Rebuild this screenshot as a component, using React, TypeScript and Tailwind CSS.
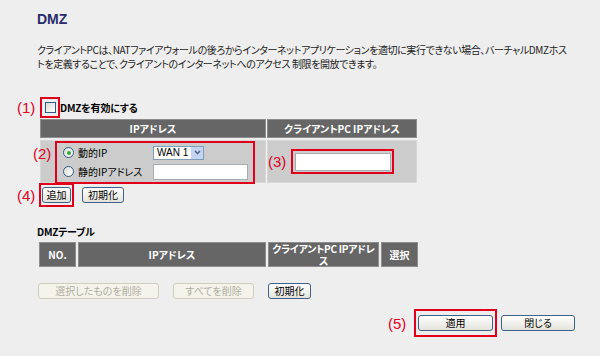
import clsx from "clsx";

const jp = "font-['Noto_Sans_CJK_JP',sans-serif] [font-feature-settings:'palt']";

const Mark = ({ n, className = "" }: { n: number; className?: string }) => (
  <span className={clsx("font-['Liberation_Sans',sans-serif] text-[15px] leading-none text-[#e0001b]", className)}>
    ({n})
  </span>
);

const Btn = ({ label, className = "", disabled = false }: { label: string; className?: string; disabled?: boolean }) => (
  <button
    className={clsx(
      "h-[16px] rounded-[3px] border text-[10px] leading-none whitespace-nowrap",
      jp,
      disabled
        ? "border-[#cfcdc0] bg-[#f5f4ec] text-[#b0ad9f]"
        : "border-[#3d6189] bg-linear-to-b from-white to-[#e4e3dc] text-black",
      className
    )}
  >
    {label}
  </button>
);

const Radio = ({ checked = false }: { checked?: boolean }) => (
  <span className="flex h-[11px] w-[11px] items-center justify-center rounded-full border border-[#2e5c8a] bg-linear-to-br from-[#dcdcd6] to-white">
    {checked && <span className="h-[4px] w-[4px] rounded-full bg-[#2fae2f]" />}
  </span>
);

const Th = ({ children, className = "" }: { children: React.ReactNode; className?: string }) => (
  <div
    className={clsx(
      "flex items-center justify-center border border-[#8d8d8d] bg-[#666666] text-center text-[10px] font-bold whitespace-nowrap text-white",
      className
    )}
  >
    {children}
  </div>
);

export default function App() {
  return (
    <div className={clsx("relative h-[356px] w-[600px] overflow-hidden bg-[#eeeeee] pt-[12px] text-[#222]", jp)}>
      <h1 className="pl-[37px] font-['Liberation_Sans',sans-serif] text-[14px] font-bold leading-[14px] text-[#2b2b6b]">
        DMZ
      </h1>

      <p className="mt-[17px] pl-[37px] text-[10px] leading-[14px] tracking-[-0.4px]">
        <span className="block whitespace-nowrap">
          クライアントPCは、NATファイアウォールの後ろからインターネットアプリケーションを適切に実行できない場合、バーチャルDMZホス
        </span>
        <span className="block whitespace-nowrap">トを定義することで、クライアントのインターネットへのアクセス 制限を開放できます。</span>
      </p>

      {/* (1) enable */}
      <div className="mt-[26px] flex h-[21px] items-center pl-[17px]">
        <Mark n={1} className="w-[23px]" />
        <div className="flex h-[21px] w-[20px] items-center justify-center border-2 border-[#e0001b]">
          <span className="h-[11px] w-[11px] border border-[#2e5c8a] bg-linear-to-br from-[#dcdcd6] to-white" />
        </div>
        <span className="text-[10px] font-bold tracking-[-0.2px] text-black">DMZを有効にする</span>
      </div>

      {/* entry table */}
      <div className="relative mt-[1px] ml-[40px] grid w-fit grid-cols-[226px_150px] gap-x-[1px] gap-y-[2px]">
        <Th className="h-[19px]">IPアドレス</Th>
        <Th className="h-[19px]">クライアントPC IPアドレス</Th>

        <div className="h-[43px] border border-[#d8d8d8] bg-[#cccccc] pl-[14px]">
          <div className="flex h-[43px] w-[200px] flex-col justify-center gap-[4px] border-2 border-[#e0001b] pl-[6px]">
            <div className="flex h-[14px] items-center">
              <Radio checked />
              <span className="ml-[4px] w-[75px] text-[10px] text-black">動的IP</span>
              <div className="flex h-[14px] w-[51px] items-center justify-between border border-[#7f9db9] bg-white pl-[3px]">
                <span className="font-['Liberation_Sans',sans-serif] text-[10px] leading-none whitespace-nowrap text-black">
                  WAN 1
                </span>
                <span className="flex h-[12px] w-[12px] items-center justify-center bg-[#c3d3f0]">
                  <svg width="7" height="5" viewBox="0 0 7 5">
                    <path d="M1 1 L3.5 3.5 L6 1" fill="none" stroke="#4d6185" strokeWidth="1.5" />
                  </svg>
                </span>
              </div>
            </div>
            <div className="flex h-[16px] items-center">
              <Radio />
              <span className="ml-[4px] w-[75px] text-[10px] text-black">静的IPアドレス</span>
              <span className="h-[16px] w-[95px] border border-[#a5acb2] bg-white" />
            </div>
          </div>
        </div>

        <div className="flex h-[43px] items-center border border-[#d8d8d8] bg-[#cccccc]">
          <Mark n={3} className="w-[23px]" />
          <div className="flex h-[25px] w-[103px] items-center justify-center border-2 border-[#e0001b]">
            <span className="h-[18px] w-[96px] border border-[#a5acb2] bg-white" />
          </div>
        </div>

        <Mark n={2} className="absolute top-[27px] left-[-7px]" />
      </div>

      {/* (4) add / reset */}
      <div className="flex h-[24px] items-center pl-[17px]">
        <Mark n={4} className="w-[22px]" />
        <div className="flex h-[24px] w-[35px] items-center justify-center border-2 border-[#e0001b]">
          <Btn label="追加" className="w-[29px]" />
        </div>
        <Btn label="初期化" className="ml-[8px] w-[42px]" />
      </div>

      <div className="mt-[18px] pl-[37px] text-[10px] font-bold leading-[14px] tracking-[-0.2px] text-black">DMZテーブル</div>

      {/* DMZ table */}
      <div className="mt-[3px] ml-[39px] grid w-fit grid-cols-[37px_188px_111px_37px] gap-x-[2px]">
        <Th className="h-[25px]">NO.</Th>
        <Th className="h-[25px]">IPアドレス</Th>
        <Th className="h-[25px] flex-col leading-[12px] tracking-[-0.3px]">
          <span>クライアントPC IPアドレ</span>
          <span>ス</span>
        </Th>
        <Th className="h-[25px]">選択</Th>
      </div>

      <div className="mt-[16px] flex items-center pl-[38px]">
        <Btn label="選択したものを削除" disabled className="w-[121px]" />
        <Btn label="すべてを削除" disabled className="ml-[14px] w-[81px]" />
        <Btn label="初期化" className="ml-[14px] w-[43px]" />
      </div>

      {/* (5) apply / close */}
      <div className="mt-[10px] flex h-[28px] items-center pl-[388px]">
        <Mark n={5} className="w-[26px]" />
        <div className="flex h-[28px] w-[83px] items-center justify-center border-2 border-[#e0001b]">
          <Btn label="適用" className="w-[75px]" />
        </div>
        <Btn label="閉じる" className="ml-[4px] w-[74px]" />
      </div>
    </div>
  );
}
